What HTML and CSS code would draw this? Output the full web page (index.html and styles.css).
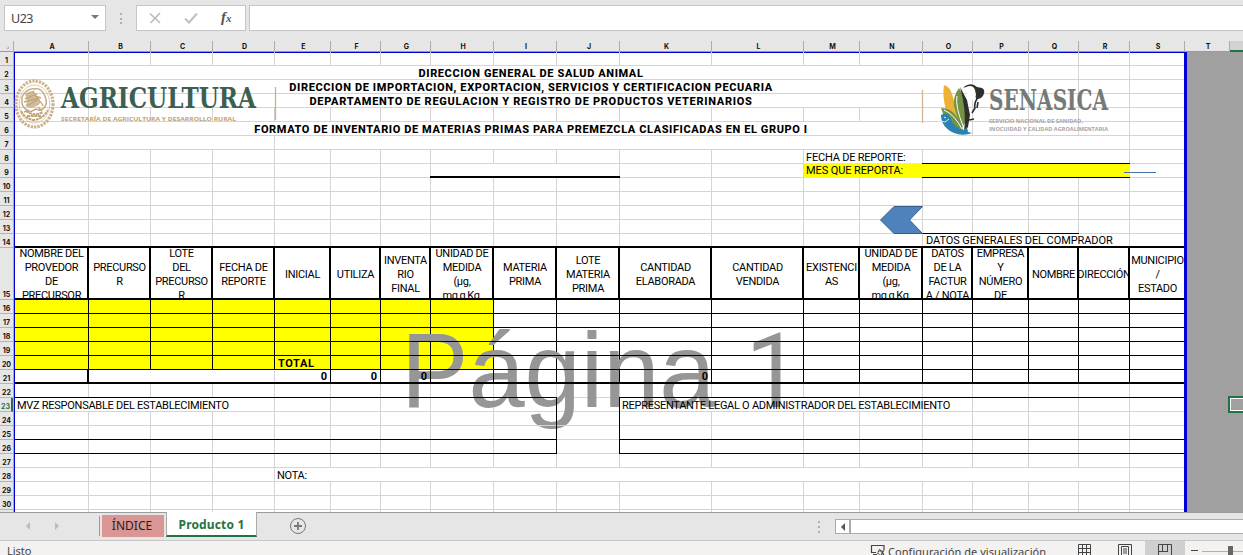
FILE: index.html
```html
<!DOCTYPE html>
<html lang="es">
<head>
<meta charset="utf-8">
<title>Inventario de materias primas</title>
<link rel="stylesheet" href="styles.css">
</head>
<body>
<div class="app">
  <header class="formula-bar">
    <div class="name-box"><span>U23</span><i class="caret"></i></div>
    <div class="dots"><i></i><i></i><i></i></div>
    <div class="fx-box">
      <svg width="12" height="12" viewBox="0 0 12 12"><path d="M1 1.500L11 11M11 1L1.500 11" stroke="#bdbdbd" stroke-width="1.700" fill="none"/></svg>
      <svg width="14" height="12" viewBox="0 0 14 12"><path d="M1 6.500L5 10.500L13 1.500" stroke="#c2c2c2" stroke-width="2.200" fill="none"/></svg>
      <span class="fx">f<small>x</small></span>
    </div>
    <div class="formula-input"></div>
  </header>

  <div class="col-heads">
    <span class="corner"><i></i></span>
    <span>A</span><span>B</span><span>C</span><span>D</span><span>E</span><span>F</span><span>G</span><span>H</span><span>I</span><span>J</span><span>K</span><span>L</span><span>M</span><span>N</span><span>O</span><span>P</span><span>Q</span><span>R</span><span>S</span><span>T</span><span class="selected"></span>
  </div>

  <main class="body">
    <div class="row-heads">
      <span>1</span><span>2</span><span>3</span><span>4</span><span>5</span><span>6</span><span>7</span><span>8</span><span>9</span><span>10</span><span>11</span><span>12</span><span>13</span><span>14</span><span>15</span><span>16</span><span>17</span><span>18</span><span>19</span><span>20</span><span>21</span><span>22</span><span class="selected">23</span><span>24</span><span>25</span><span>26</span><span>27</span><span>28</span><span>29</span><span>30</span>
    </div>

    <div class="sheet">
      <div class="lines upper"></div>
      <div class="lines lower"></div>

      <!-- merged ranges -->
      <div class="merge r2 c2-15"></div>
      <div class="merge r3 c2-15"></div>
      <div class="merge r4 c2-15"></div>
      <div class="merge r6 c2-15"></div>
      <div class="merge r5 c14-15"></div>
      <div class="merge r7 c5-18"></div>
      <div class="merge r7 c1-4"></div>
      <div class="merge r8 c13-14"></div>
      <div class="merge r8 c15-18"></div>
      <div class="merge r9 c8-10"></div>
      <div class="merge r14 c15-18"></div>
      <div class="merge r21 c2-4"></div>
      <div class="merge r23 c1-4"></div>
      <div class="merge r23 c11-14"></div>
      <div class="merge r28 c5-18"></div>

      <div class="yellow r9 c13-18"></div>
      <div class="yellow r16-20 c1-8"></div>

      <div class="watermark">Página <span>1</span></div>
      <div class="lines over22"></div>
      <div class="lines over24"></div>

      <!-- black borders -->
      <div class="vlines r16-20 c1-19"></div>
      <div class="vlines r21 c5-19"></div>
      <div class="thick-right r21 c1"></div>
      <div class="bottom r16 c1-19"></div>
      <div class="bottom r17 c1-19"></div>
      <div class="bottom r18 c1-19"></div>
      <div class="bottom r19 c1-19"></div>
      <div class="bottom r20 c1-19"></div>
      <div class="bottom thick r21 c1-19"></div>
      <div class="bottom thick r14 c1-19"></div>
      <div class="bottom thick r9 c8-10"></div>
      <div class="bottom r8 c15-18"></div>
      <div class="bottom r9 c15-18"></div>
      <div class="bottom r13 c15-17"></div>
      <div class="bottom r22 c1-9"></div>
      <div class="bottom r22 c11-19"></div>
      <div class="bottom r25 c1-9"></div>
      <div class="bottom r25 c11-19"></div>
      <div class="bottom r26 c1-9"></div>
      <div class="bottom r26 c11-19"></div>
      <div class="right r23-26 c1-9"></div>
      <div class="right r23-26 c10"></div>

      <!-- titles -->
      <h1 class="title t1 r2 c2-15">DIRECCION GENERAL DE SALUD ANIMAL</h1>
      <h1 class="title t2 r3 c2-15">DIRECCION DE IMPORTACION, EXPORTACION, SERVICIOS Y CERTIFICACION PECUARIA</h1>
      <h1 class="title t3 r4 c2-15">DEPARTAMENTO DE REGULACION Y REGISTRO DE PRODUCTOS VETERINARIOS</h1>
      <h1 class="title t4 r6 c2-15">FORMATO DE INVENTARIO DE MATERIAS PRIMAS PARA PREMEZCLA CLASIFICADAS EN EL GRUPO I</h1>

      <div class="text report r8 c13-14">FECHA DE REPORTE:</div>
      <div class="text report up r9 c13-14">MES QUE REPORTA:</div>
      <div class="text buyer r14 c15-18">DATOS GENERALES DEL COMPRADOR</div>

      <div class="table-head">
        <div>NOMBRE DEL<br>PROVEDOR<br>DE<br>PRECURSOR</div>
        <div>PRECURSO<br>R</div>
        <div>LOTE<br>DEL<br>PRECURSO<br>R</div>
        <div>FECHA DE<br>REPORTE</div>
        <div>INICIAL</div>
        <div>UTILIZA</div>
        <div>INVENTA<br>RIO<br>FINAL</div>
        <div>UNIDAD DE<br>MEDIDA<br>(µg,<br>mg,g,Kg,</div>
        <div>MATERIA<br>PRIMA</div>
        <div>LOTE<br>MATERIA<br>PRIMA</div>
        <div>CANTIDAD<br>ELABORADA</div>
        <div>CANTIDAD<br>VENDIDA</div>
        <div>EXISTENCI<br>AS</div>
        <div>UNIDAD DE<br>MEDIDA<br>(µg,<br>mg,g,Kg,</div>
        <div>DATOS<br>DE LA<br>FACTUR<br>A / NOTA</div>
        <div>EMPRESA<br>Y<br>NÚMERO<br>DE</div>
        <div class="name">NOMBRE</div>
        <div class="address">DIRECCIÓN</div>
        <div>MUNICIPIO<br>/<br>ESTADO</div>
      </div>

      <div class="text total r20 c5">TOTAL</div>
      <div class="text num r21 c5">0</div>
      <div class="text num r21 c6">0</div>
      <div class="text num r21 c7">0</div>
      <div class="text num r21 c11">0</div>
      <div class="text mvz r23 c1-9">MVZ RESPONSABLE DEL ESTABLECIMIENTO</div>
      <div class="text rep r23 c11-19">REPRESENTANTE LEGAL O ADMINISTRADOR DEL ESTABLECIMIENTO</div>
      <div class="text nota r28 c5">NOTA:</div>

      <!-- drawings floating over the cells -->
      <svg class="logo-agri" width="265" height="62" viewBox="14 76 265 62">
        <g fill="none" stroke="#c2a577">
          <ellipse cx="34.500" cy="104" rx="18.500" ry="23" stroke-width="3.200" stroke-dasharray="2.300 1.100" opacity=".85"/>
          <ellipse cx="34.500" cy="104" rx="15.300" ry="19" stroke-width=".6"/>
          <path d="M22 97q5-9 12-8q7-2 11 7q3 8-1 12q-4 4-8 1l-6 3q-6-3-8-8zM25 99l12-5M24 102l15-4M27 106l10-6M33 91l2 5l6 2M36 98q5 3 7 8M29 110l-5 2M38 107l4 4" stroke-width="1.400"/>
          <path d="M21 111q4 8 13 9q9-1 14-10M26 111q8 6 17 1M27 116h14" stroke-width="2" stroke-dasharray="3 .6"/>
        </g>
        <path d="M25 94q6-5 10-2l-4 5q5-2 8 1q3 5-2 8l-6 2l-6-2q3-4 2-6z" fill="#c2a577" opacity=".75"/>
        <text x="61" y="108" class="agri" textLength="195" lengthAdjust="spacingAndGlyphs">AGRICULTURA</text>
        <text x="61" y="120.500" class="agri-sub" textLength="175" lengthAdjust="spacingAndGlyphs">SECRETARÍA DE AGRICULTURA Y DESARROLLO RURAL</text>
        <path d="M275.500 87v33" stroke="#cbb18c" stroke-width="1.300"/>
      </svg>

      <svg class="logo-sena" width="195" height="60" viewBox="918 80 195 60">
        <path d="M922.500 90v33" stroke="#cfb795" stroke-width="1.300"/>
        <path d="M944 85q6 1 9 12l6 24l5 13q-16-13-18-24q-4-15-2-25z" fill="#edb235"/>
        <path d="M959 88q-6 8-5 18l7 23l4-6q2-18-2-28z" fill="#739443"/>
        <path d="M941 108q10 0 15 8q6 6 7 15q-13-2-18-12z" fill="#739443"/>
        <path d="M957 96q-2 10 6 30M944 110q10 4 18 19" stroke="#fff" stroke-width="1" fill="none"/>
        <path d="M960 87l7 13l3 15l-2 12l-4 5q3-20-4-45z" fill="#302f2f"/>
        <path d="M961 91l4-5q7-4 12 1l5 1q4 2 1 8q-3 4-7 3l-1-7q-2-3-8-5q-4 0-6 4z" fill="#302f2f"/>
        <path d="M966 87q7-3 9 3l1 5l-4 5l-3-4l-4-4z" fill="#fff"/>
        <path d="M977 99q-3 4-2 9l-3 5M969 120l5-1M978 102l-1 6" stroke="#302f2f" stroke-width="1.600" fill="none"/>
        <path d="M941 115q6-4 9 2q4 12 14 13l3-3l1 5l4 1l-3 1q-8 2-15-1q-13-6-13-18z" fill="#2a82b0"/>
        <path d="M941 121l4 1l4-3" stroke="#fff" stroke-width=".8" fill="none"/>
        <circle cx="945" cy="117.500" r=".8" fill="#fff"/>
        <text x="989" y="110" class="sena" textLength="119" lengthAdjust="spacingAndGlyphs">SENASICA</text>
        <text x="989" y="123" class="sena-sub" textLength="94" lengthAdjust="spacingAndGlyphs">SERVICIO NACIONAL DE SANIDAD,</text>
        <text x="989" y="130.500" class="sena-sub" textLength="119" lengthAdjust="spacingAndGlyphs">INOCUIDAD Y CALIDAD AGROALIMENTARIA</text>
      </svg>

      <svg class="arrow" width="46" height="30" viewBox="879 205 46 30"><path d="M880.500 220L894 206.500H922.500L909.500 220L922.500 233.500H894Z" fill="#4f81bd" stroke="#385d8a"/></svg>
      <i class="connector"></i>
    </div>

    <div class="outside"><i class="cursor"></i></div>
  </main>

  <nav class="tabs">
    <svg class="nav-arrows" width="40" height="10" viewBox="0 0 40 10"><path d="M5 1v8L1 5zM30 1v8L34 5z" fill="#bcbcbc"/></svg>
    <i class="tab-sep"></i>
    <span class="tab index">ÍNDICE</span>
    <span class="tab active">Producto 1</span>
    <svg class="add" width="18" height="18" viewBox="0 0 18 18"><circle cx="9" cy="9" r="7.500" fill="none" stroke="#777"/><path d="M9 5v8M5 9h8" stroke="#777" stroke-width="1.800"/></svg>
    <div class="dots"><i></i><i></i><i></i></div>
    <div class="scroll"><span><i></i></span></div>
  </nav>

  <footer class="status">
    <span class="ready">Listo</span>
    <svg class="display-icon" width="16" height="12" viewBox="0 0 16 12"><path d="M6 8.500H1.500V1.500H14V6" fill="none" stroke="#444" stroke-width="1.200"/><path d="M3 10.500h4" stroke="#444"/><circle cx="10.500" cy="9" r="2.500" fill="none" stroke="#444" stroke-width="1.500" stroke-dasharray="1.500 .7"/><path d="M9 5l5 6M14 6l-3 5" stroke="#444"/></svg>
    <span class="config">Configuración de visualización</span>
    <span class="view normal"><svg width="14" height="12" viewBox="0 0 14 12"><path d="M.5 .5h12v12M.5 .5v12M4.500 0v12M8.500 0v12M0 4.500h13M0 8.500h13" fill="none" stroke="#444"/></svg></span>
    <span class="view page"><svg width="14" height="12" viewBox="0 0 14 12"><path d="M.5 12V.5h13V12M3.500 12V2.500h7V12M5 5h4M5 7h4M5 9h4" fill="none" stroke="#444"/></svg></span>
    <span class="view breaks"><svg width="14" height="12" viewBox="0 0 14 12"><path d="M.5 12V.5h13V12M4.500 0v7.500M9.500 0v7.500M0 7.500h10" fill="none" stroke="#444"/></svg></span>
    <i class="minus"></i>
    <i class="slider"></i>
  </footer>
</div>
</body>
</html>
```
FILE: styles.css
```css
* { box-sizing: border-box; }
body { margin: 0; font-family: Roboto, "Liberation Sans", sans-serif; }
.app {
  --cols: 74px 62px 62px 62px 56px 50px 50px 63px 63px 63px 92px 92px 56px 63px 50px 56px 50px 51px;
  --rows: 13px repeat(13, 14px) 52px repeat(15, 14px) 2px;
  width: 1243px; height: 555px; overflow: hidden;
  display: flex; flex-direction: column; background: #e6e6e6;
}

/* formula bar */
.formula-bar { height: 41px; flex: none; display: flex; padding-top: 5px; }
.name-box { width: 102px; height: 26px; margin-left: 4px; border: 1px solid #c6c6c6; background: #fff; display: flex; align-items: center; justify-content: space-between; padding: 0 6px 0 6px; font: 12.500px "Noto Sans", sans-serif; color: #444; letter-spacing: -.5px; }
.caret { border: 4px solid transparent; border-top-color: #777; border-bottom: 0; margin-top: -2px; }
.dots { width: 3px; display: flex; flex-direction: column; gap: 2px; }
.dots i { width: 2px; height: 2px; background: #b0b0b0; }
.formula-bar .dots { margin: 8px 13px 0 14px; gap: 2.500px; }
.fx-box { width: 110px; height: 26px; border: 1px solid #c6c6c6; background: #fff; display: flex; align-items: center; gap: 23px; padding-left: 12px; }
.fx { font: italic bold 15px "Liberation Serif", serif; color: #555; line-height: 16px; margin-top: -2px; }
.fx small { font-size: 11px; }
.formula-input { flex: 1; height: 26px; margin-left: 3px; border: 1px solid #c6c6c6; border-right: 0; background: #fff; }

/* column letters */
.col-heads { height: 11px; flex: none; display: grid; grid-template-columns: 14px 75px 62px 62px 62px 56px 50px 50px 63px 63px 63px 92px 92px 56px 63px 50px 56px 50px 51px 55px 45px 1fr; border-bottom: 1px solid #9a9a9a; }
.col-heads span { border-right: 1px solid #ababab; padding-left: 2px; font: bold 7px/12px Inter, sans-serif; text-align: center; color: #111; }
.col-heads .corner { display: flex; justify-content: center; align-items: center; }
.corner i { border-bottom: 3px solid #b8b8b8; border-left: 3px solid transparent; }
.col-heads .selected { background: #d2d2d2; border-right: 0; border-bottom: 2px solid #217346; height: 11px; }

/* row numbers */
.body { height: 460px; flex: none; display: flex; }
.row-heads { width: 14px; display: grid; grid-template-rows: 14px repeat(13, 14px) 52px repeat(15, 14px) 2px; border-right: 1px solid #ababab; }
.row-heads span { border-bottom: 1px solid #b5b5b5; font: bold 7px/8px Inter, sans-serif; text-align: center; display: flex; align-items: flex-end; justify-content: center; color: #111; }
.row-heads .selected { color: #217346; border-right: 2px solid #217346; }

/* sheet */
.sheet { width: 1173px; position: relative; background: #fff; border: 1px solid #00c; border-right: 3px solid #0000d8; border-bottom: 0; display: grid; grid-template-columns: var(--cols) 1fr; grid-template-rows: var(--rows); }
.lines { --line: #d4d4d4; }
.vlines { --line: #000; }
.lines, .vlines {
  --v: linear-gradient(90deg, transparent 73px, var(--line) 73px 74px, transparent 74px 135px, var(--line) 135px 136px, transparent 136px 197px, var(--line) 197px 198px, transparent 198px 259px, var(--line) 259px 260px, transparent 260px 315px, var(--line) 315px 316px, transparent 316px 365px, var(--line) 365px 366px, transparent 366px 415px, var(--line) 415px 416px, transparent 416px 478px, var(--line) 478px 479px, transparent 479px 541px, var(--line) 541px 542px, transparent 542px 604px, var(--line) 604px 605px, transparent 605px 696px, var(--line) 696px 697px, transparent 697px 788px, var(--line) 788px 789px, transparent 789px 844px, var(--line) 844px 845px, transparent 845px 907px, var(--line) 907px 908px, transparent 908px 957px, var(--line) 957px 958px, transparent 958px 1013px, var(--line) 1013px 1014px, transparent 1014px 1063px, var(--line) 1063px 1064px, transparent 1064px 1114px, var(--line) 1114px 1115px, transparent 1115px);
  --h: repeating-linear-gradient(180deg, transparent 0 13px, var(--line) 13px 14px);
  grid-column: 1 / -1; background: var(--v);
}
.lines.upper { grid-row: 1 / 15; margin-top: -1px; background: var(--v), var(--h); }
.lines.lower { grid-row: 16 / -1; background: var(--v), var(--h); }
.lines.over22 { grid-row: 22; }
.lines.over24 { grid-row: 24 / 26; background: var(--v), var(--h); clip-path: inset(0 550px 0 360px); }
.vlines.c5-19 { clip-path: inset(0 0 0 300px); grid-column: 1 / -1; }
.merge { background: #fff; margin: 0 1px 1px 0; }
.yellow { background: #ff0; margin-right: 0; }
.yellow.r9 { margin-top: -1px; }
.bottom { border-bottom: 1px solid #000; z-index: 1; }
.bottom.thick { border-bottom-width: 2px; }
.bottom.r8, .bottom.r9, .bottom.r13, .bottom.c11-19 { margin-left: -1px; }
.right { border-right: 1px solid #000; z-index: 1; }
.thick-right { border-right: 2px solid #000; }
.watermark { position: absolute; left: 386px; top: 258px; font: 106px/118px "Liberation Sans", Arial, sans-serif; color: #969696; white-space: nowrap; transform: scaleX(.953); transform-origin: 0 0; }
.watermark span { font: 103px/1 Roboto, sans-serif; margin-left: 2px; }

.r2 { grid-row: 2; } .r3 { grid-row: 3; } .r4 { grid-row: 4; } .r5 { grid-row: 5; }
.r6 { grid-row: 6; } .r7 { grid-row: 7; } .r8 { grid-row: 8; } .r9 { grid-row: 9; }
.r13 { grid-row: 13; } .r14 { grid-row: 14; } .r16 { grid-row: 16; } .r17 { grid-row: 17; }
.r18 { grid-row: 18; } .r19 { grid-row: 19; } .r20 { grid-row: 20; } .r21 { grid-row: 21; }
.r22 { grid-row: 22; } .r23 { grid-row: 23; } .r25 { grid-row: 25; } .r26 { grid-row: 26; }
.r28 { grid-row: 28; } .r16-20 { grid-row: 16 / 21; } .r23-26 { grid-row: 23 / 27; }
.c1 { grid-column: 1; } .c5 { grid-column: 5; } .c6 { grid-column: 6; } .c7 { grid-column: 7; }
.c10 { grid-column: 10; } .c11 { grid-column: 11; }
.c1-4 { grid-column: 1 / 5; } .c2-4 { grid-column: 2 / 5; } .c1-8 { grid-column: 1 / 9; } .c1-9 { grid-column: 1 / 10; }
.c1-19 { grid-column: 1 / -1; } .c2-15 { grid-column: 2 / 16; } .c5-18 { grid-column: 5 / 19; }
.c8-10 { grid-column: 8 / 11; } .c11-14 { grid-column: 11 / 15; } .c11-19 { grid-column: 11 / -1; }
.c13-14 { grid-column: 13 / 15; } .c13-18 { grid-column: 13 / 19; } .c14-15 { grid-column: 14 / 16; }
.c15-17 { grid-column: 15 / 18; } .c15-18 { grid-column: 15 / 19; }

.title { margin: 0; font-size: 11px; line-height: 15px; font-weight: 800; text-align: center; white-space: nowrap; color: #000; z-index: 1; letter-spacing: .6px; }
.t2 { letter-spacing: .62px; }
.t3 { letter-spacing: .7px; }
.text { font-size: 11px; line-height: 15px; white-space: nowrap; padding-left: 2px; letter-spacing: -.27px; z-index: 1; }
.text.report { letter-spacing: -.2px; }
.text.buyer { letter-spacing: -.08px; line-height: 14px; padding-left: 3px; }
.text.up { margin-top: -1px; letter-spacing: -.1px; }
.text.total { font-weight: 700; letter-spacing: .6px; padding-left: 3px; }
.text.num { font-weight: 700; letter-spacing: 0; text-align: right; padding-right: 4px; line-height: 14px; }
.table-head { grid-row: 15; grid-column: 1 / -1; display: grid; grid-template-columns: var(--cols) 1fr; background: #fff; border-bottom: 2px solid #000; font-size: 11px; line-height: 14px; letter-spacing: -.3px; text-align: center; }
.table-head div { height: 50px; padding: 4px 0 0 1px; display: flex; align-items: center; justify-content: center; overflow: hidden; border-right: 2px solid #000; white-space: nowrap; }
.table-head div:last-child { border-right: 0; }

.logo-agri, .logo-sena, .arrow, .connector { position: absolute; z-index: 1; }
.logo-agri { left: -1px; top: 23px; }
.logo-sena { left: 903px; top: 27px; }
.arrow { left: 864px; top: 152px; }
.connector { left: 1109px; top: 119px; width: 32px; height: 1px; background: #4472a8; }
.agri { font: bold 28.500px "DejaVu Serif", serif; fill: #3c5f52; }
.agri-sub { font: bold 6px "Open Sans", sans-serif; fill: #c0a172; }
.sena { font: bold 28px "DejaVu Serif", serif; fill: #757978; }
.sena-sub { font: bold 6px "Open Sans", sans-serif; fill: #a5a5a5; }

.outside { flex: 1; background: #a0a0a0; position: relative; overflow: hidden; }
.cursor { position: absolute; left: 41px; top: 344px; width: 40px; height: 17px; border: 2px solid #217346; box-shadow: inset 0 0 0 1px #fff; }

/* sheet tabs */
.tabs { height: 29px; flex: none; display: flex; border-top: 1px solid #9b9b9b; border-bottom: 1px solid #c6c6c6; font: 12px "Noto Sans", sans-serif; }
.nav-arrows { margin: 8px 34px 0 25px; flex: none; }
.tab-sep { width: 1px; height: 20px; margin: 3px 2px 0 0; background: #9b9b9b; }
.tab { flex: none; text-align: center; }
.index { width: 62px; height: 22px; margin-top: 2px; background: #da9694; color: #222; line-height: 21px; padding-right: 2px; }
.active { width: 91px; height: 25px; margin: -1px 0 0 2px; background: #fff; border: 1px solid #ababab; border-top: 0; border-bottom: 2px solid #217346; color: #217346; font-weight: 700; line-height: 26px; letter-spacing: .15px; }
.add { margin: 4px 0 0 32px; }
.tabs .dots { margin: 8px 0 0 511px; gap: 3px; }
.scroll { flex: 1; height: 15px; margin: 6px 0 0 14px; border: 1px solid #ababab; border-right: 0; background: #fff; }
.scroll span { display: flex; align-items: center; justify-content: center; width: 15px; height: 13px; border-right: 2px solid #ababab; }
.scroll i { border: 4px solid transparent; border-right-color: #555; border-left: 0; }

/* status bar */
.status { flex: 1; background: #f3f2f1; display: flex; overflow: hidden; font: 11px/16px "Noto Sans", sans-serif; color: #444; }
.status span { white-space: nowrap; flex: none; }
.ready { width: 863px; padding: 2px 0 0 7px; }
.display-icon { margin: 3px 2px 0 7px; flex: none; }
.config { width: 178px; padding-top: 3px; letter-spacing: .05px; }
.view svg { margin-top: 3px; }
.normal { margin-left: 12px; width: 40px; }
.page { width: 27px; }
.breaks { width: 40px; background: #cfcfcf; padding-left: 13px; }
.minus { width: 7px; height: 1px; margin: 9px 4px 0 6px; background: #444; }
.slider { flex: 1; height: 1px; margin-top: 10px; background: #b0b0b0; position: relative; }
.slider::before { content: ""; position: absolute; left: 26px; top: -5px; width: 5px; height: 12px; background: #666; }
```
